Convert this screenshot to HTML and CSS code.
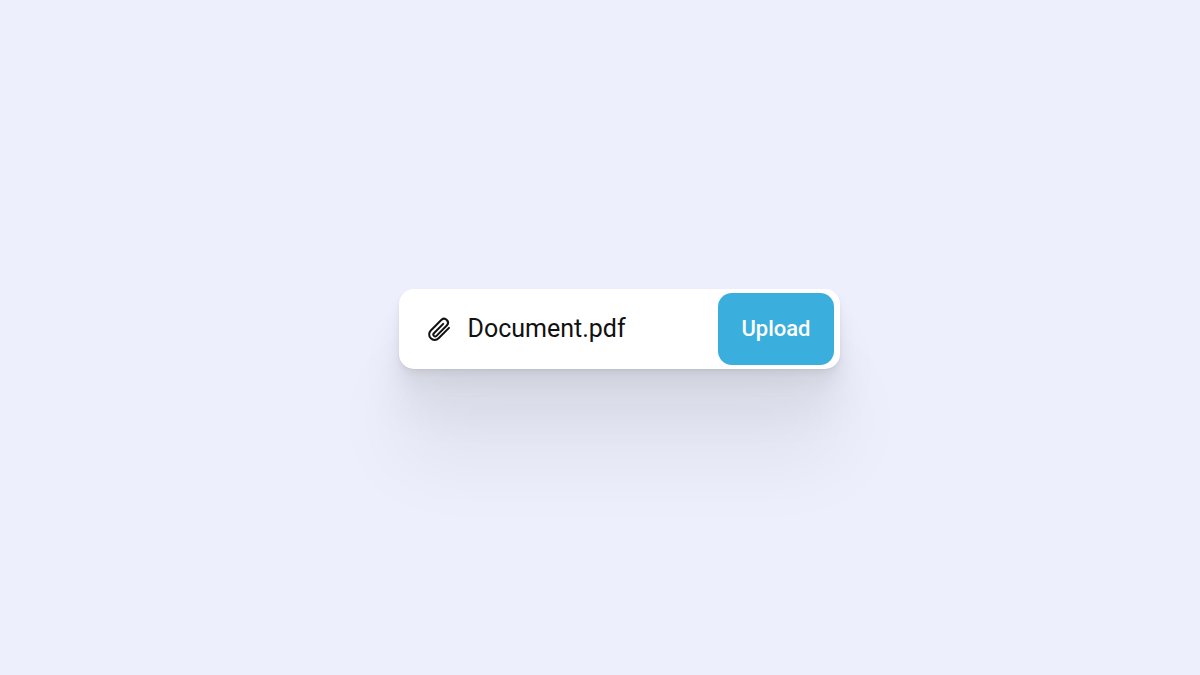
FILE: index.html
```html
<!DOCTYPE html>
<html lang="en">
<head>
  <meta charset="utf-8">
  <meta name="viewport" content="width=device-width, initial-scale=1">
  <title>Upload</title>
  <link rel="stylesheet" href="styles.css">
</head>
<body>
  <form class="upload">
    <svg class="upload-icon" viewBox="0 0 28 28" aria-hidden="true">
      <path d="M18.2 8.9 8.9 18.3a1.8 1.8 0 0 0 2.6 2.6L22 10.3a3.9 3.9 0 0 0-5.5-5.5L5.8 15.5a5.5 5.5 0 0 0 7.8 7.8L24 12.9"/>
    </svg>
    <span class="upload-name">Document.pdf</span>
    <button class="upload-button" type="button">Upload</button>
  </form>
</body>
</html>
```
FILE: styles.css
```css
* {
  box-sizing: border-box;
}

body {
  margin: 0;
  min-height: 100vh;
  padding: 0 0 18px 38px;
  display: flex;
  align-items: center;
  justify-content: center;
  background: #edeffc;
  font-family: Roboto, sans-serif;
}

.upload {
  display: flex;
  align-items: center;
  width: 100%;
  max-width: 441px;
  padding: 4px 6px 4px 26px;
  border-radius: 15px;
  background: #fff;
  box-shadow:
    0 1px 2px rgba(0, 0, 0, 0.04),
    0 4px 6px rgba(0, 0, 0, 0.05),
    0 14px 20px rgba(0, 0, 0, 0.05),
    0 42px 44px rgba(0, 0, 0, 0.06),
    0 90px 80px rgba(0, 0, 0, 0.06);
}

.upload-icon {
  flex: none;
  width: 28px;
  height: 28px;
  margin-right: 15px;
  fill: none;
  stroke: #111;
  stroke-width: 2;
  stroke-linecap: round;
  stroke-linejoin: round;
}

.upload-name {
  flex: 1;
  color: #111;
  font-size: 25px;
  line-height: 32px;
}

.upload-button {
  padding: 22px 23px;
  border: 0;
  border-radius: 14px;
  background: #3aaedc;
  color: #fff;
  font: 500 22px/28px Roboto, sans-serif;
}
```
